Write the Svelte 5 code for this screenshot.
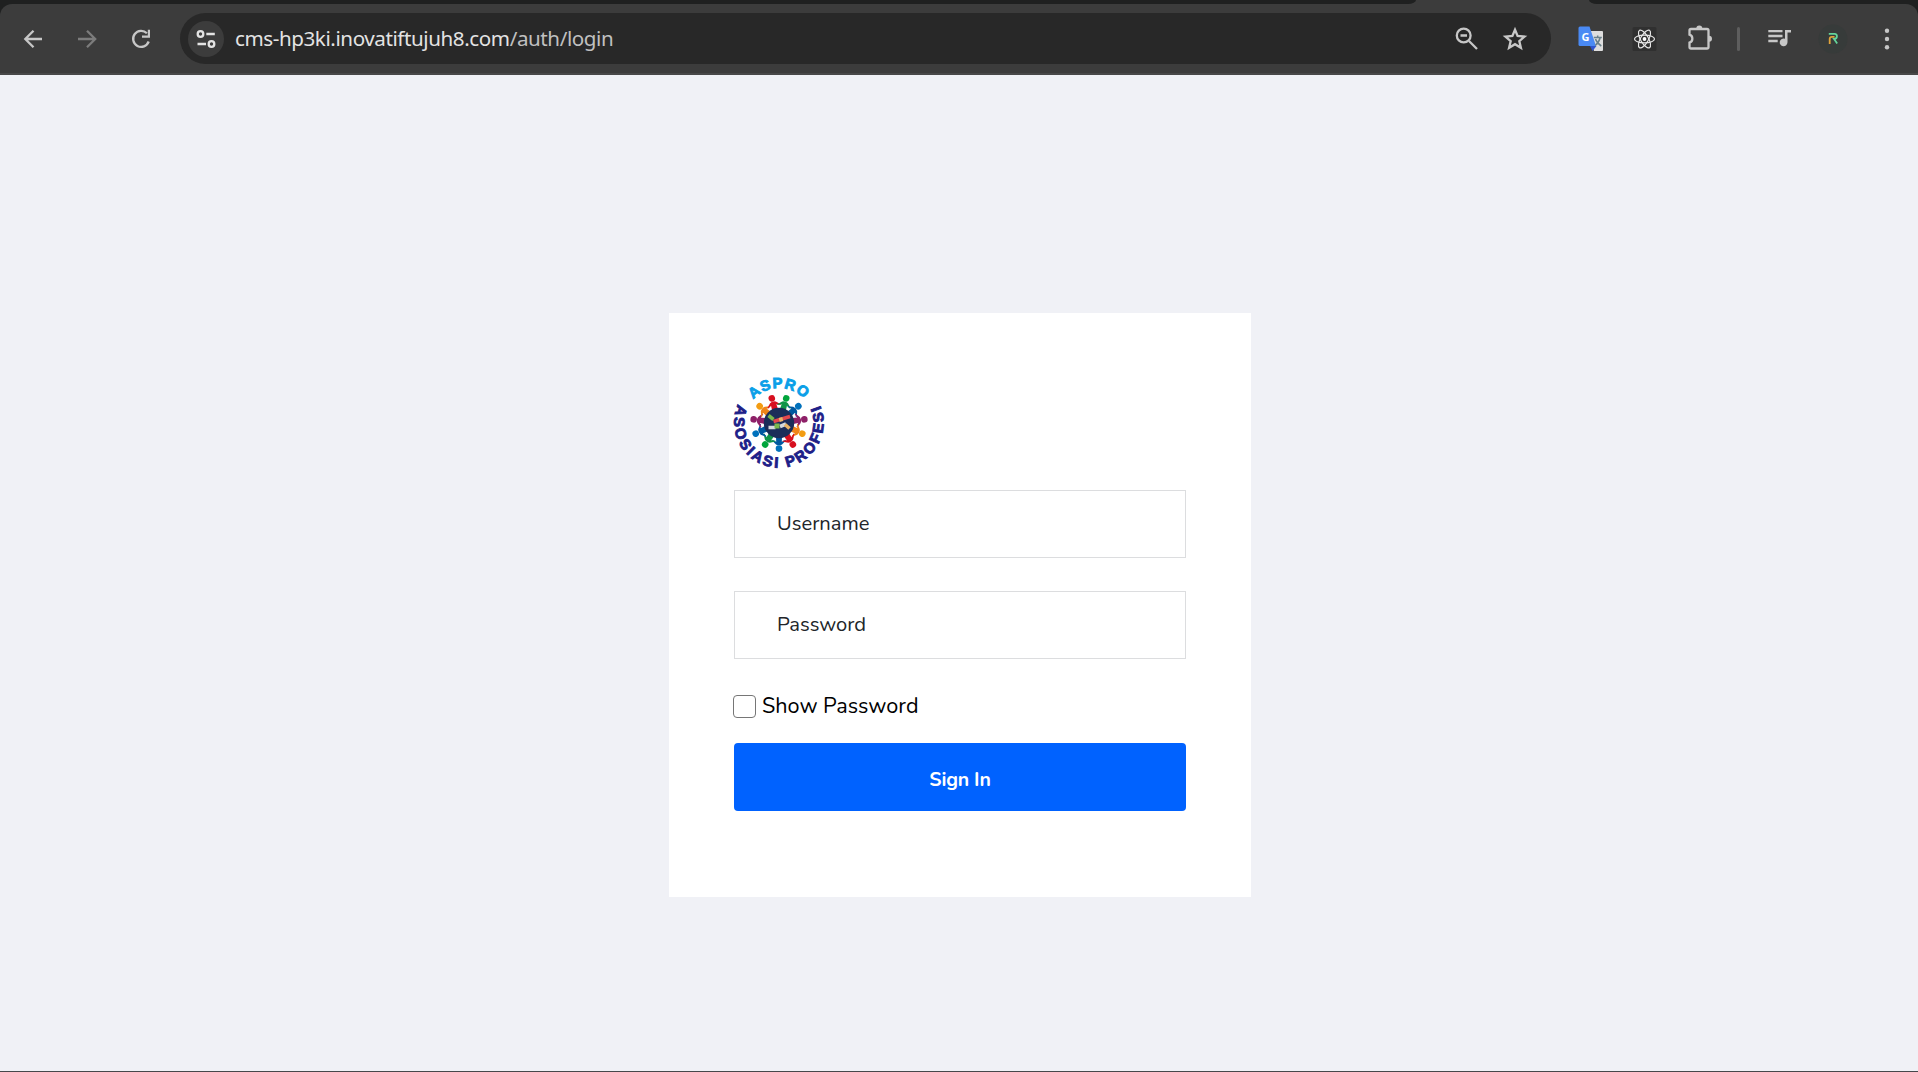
<script>
  let username = $state('');
  let password = $state('');
  let showPassword = $state(false);

  const step = 360 / 11;
  const people = [
    ['#0071bc', '#0058a0'],
    ['#00a53c', '#109447'],
    ['#0071bc', '#0058a0'],
    ['#8e2068', '#8e2068'],
    ['#f39c12', '#f08519'],
    ['#d7101f', '#d7101f'],
    ['#00a53c', '#109447'],
    ['#0071bc', '#0058a0'],
    ['#8e2068', '#8e2068'],
    ['#f39c12', '#f08519'],
    ['#d7101f', '#d7101f']
  ].map(([head, body], i) => ({ head, body, angle: i * step }));
</script>

<div class="browser">
  <div class="tabstrip">
    <div class="strip-left"></div>
    <div class="strip-right"></div>
  </div>
  <div class="toolbar-back">
    <header class="toolbar">
      <svg class="icon" viewBox="0 0 30 30"><path class="line" d="M24 15H7.5M15.500 6.800 7.300 15l8.200 8.200" /></svg>
      <svg class="icon dim" viewBox="0 0 30 30"><path class="line" d="M6 15h16.500M15 6.800 23.200 15 15 23.200" /></svg>
      <svg class="icon" viewBox="0 0 30 30">
        <path class="line" d="M22.700 17.500a8 8 0 1 1-1.800-8.200" />
        <path class="solid" d="M24 5.800v8h-8v-2.300h5.800V5.800z" />
      </svg>
      <div class="address">
        <span class="site">
          <svg class="icon" viewBox="0 0 30 30">
            <circle class="line" cx="9.500" cy="10" r="2.800" />
            <circle class="line" cx="20.500" cy="20" r="2.800" />
            <path class="line" d="M15.300 10h8.500M6.500 20H15" />
          </svg>
        </span>
        <span class="url">cms-hp3ki.inovatiftujuh8.com<span class="path">/auth/login</span></span>
        <svg class="icon" viewBox="0 0 30 30">
          <circle class="line" cx="11.700" cy="11.500" r="6.900" />
          <path class="line" d="m17 17 8 8M8.500 11.500H15" />
        </svg>
        <svg class="icon star" viewBox="0 0 30 30">
          <path class="line" d="m15 5.700 2.600 6.300 6.900.600-5.200 4.500 1.600 6.700-5.900-3.600-5.900 3.600 1.600-6.700-5.200-4.500 6.900-.600z" />
        </svg>
      </div>
      <svg class="icon" viewBox="0 0 30 30">
        <path fill="#dedede" d="M12 7h14q1 0 1 1v18q0 1-1 1H18z" />
        <path fill="#2f55cf" d="M14 22h6.500L16.500 27z" />
        <path fill="#4a8af4" d="M4 2.500h9.500L20 22H4q-1.500 0-1.500-1.500V4q0-1.500 1.500-1.500z" />
        <path fill="none" stroke="#69808a" stroke-width="1.500" d="M17.800 13.500h8M21.700 11.500v2M24.200 13.500c-.8 3.500-2.500 6-5 8M19.500 15c1 3 3.500 5.500 5.800 7" />
        <text x="5.500" y="16.500" font-size="11" font-weight="700" fill="#fff">G</text>
      </svg>
      <svg class="icon" viewBox="0.500 0 30 30">
        <rect x="3" y="3" width="24" height="24" rx="1.500" fill="#303030" />
        <g fill="none" stroke="#e8e8e8" stroke-width="1.200">
          <ellipse cx="15" cy="15" rx="10" ry="3.900" />
          <ellipse cx="15" cy="15" rx="10" ry="3.900" transform="rotate(60 15 15)" />
          <ellipse cx="15" cy="15" rx="10" ry="3.900" transform="rotate(120 15 15)" />
        </g>
        <circle cx="15" cy="15" r="1.900" fill="#fff" />
      </svg>
      <svg class="icon" viewBox="-0.500 0.500 30 30">
        <path class="line" d="M6.500 5.500h16q1.500 0 1.500 1.500v16.500q0 1.500-1.500 1.500h-16Q5 25 5 23.500V19.200c3.800-1.200 3.800-6.800 0-8V7q0-1.500 1.500-1.500z" />
        <path class="solid" d="M11.800 5a3 3 0 0 1 6 0zM24.500 12.300a3 3 0 0 1 0 6z" />
      </svg>
      <span class="divider"></span>
      <svg class="icon" viewBox="-0.500 0 30 30">
        <path class="line" d="M3.800 7.200H18M3.800 12H18M3.800 17H13.200" />
        <path class="solid" d="M20.500 6h6v2.600h-3.500v9.700a3.900 3.900 0 1 1-2.500-3.600z" />
      </svg>
      <svg class="icon" viewBox="0 0 30 30">
        <circle cx="15" cy="15" r="14.500" fill="#373b3a" />
        <g fill="none" stroke-width="1.800">
          <path stroke="#e0a33a" d="M11.700 20v-5q0-2.200 2.200-2.200h2.600" />
          <path stroke="#64d49a" d="M10.800 9.800h5.800c3.200 0 3.200 5.200-.6 5.200l3.200 4.500" />
        </g>
      </svg>
      <svg class="icon" viewBox="0 0 30 30">
        <circle class="solid" cx="15" cy="6.800" r="2.200" />
        <circle class="solid" cx="15" cy="15" r="2.200" />
        <circle class="solid" cx="15" cy="23.200" r="2.200" />
      </svg>
    </header>
  </div>

  <main class="page">
    <form class="card" onsubmit={(e) => e.preventDefault()}>
      <svg class="logo" viewBox="0 0 90 90">
        <defs>
          <path id="arc-top" d="M19.200 21.500A35 35 0 0 1 70.800 21.500" />
          <path id="arc-bottom" d="M4 26.500A44.800 44.800 0 1 0 85.500 26" />
        </defs>
        <text class="brand top"><textPath href="#arc-top" textLength="57">ASPRO</textPath></text>
        <text class="brand bottom"><textPath href="#arc-bottom" textLength="177">ASOSIASI PROFESI</textPath></text>
        {#each people as p}
          <g transform="translate(45 45) rotate({p.angle})">
            <path fill={p.body} d="M-3 21.500Q0 23.200 3 21.500L7 17.500 6.500 16.800 2.800 18.800 3 14H-3L-2.800 18.800-6.500 16.800-7 17.500z" />
            <circle fill={p.head} cy="25.600" r="3.300" />
          </g>
        {/each}
        <circle cx="45" cy="45" r="15.200" fill="#1b2d59" />
        <g stroke-width="3.600" fill="none">
          <path stroke="#79b84c" d="m34.500 37.500 5 4" />
          <path stroke="#e5484d" d="M39.500 43.500 56 38.500" />
          <path stroke="#d5d9dc" d="M34.500 49.500h7M46 48.500l6-2.500" />
          <path stroke="#eab566" d="m46.500 39.500 1 4M51 46.500l4.500 4" />
          <path stroke="#79b84c" d="M40.500 48h5" stroke-width="5" />
        </g>
      </svg>
      <input class="field" type="text" placeholder="Username" bind:value={username} />
      <input class="field second" type={showPassword ? 'text' : 'password'} placeholder="Password" bind:value={password} />
      <label class="show">
        <input class="check" type="checkbox" bind:checked={showPassword} />
        <span>Show Password</span>
      </label>
      <button class="submit" type="submit">Sign In</button>
    </form>
  </main>
</div>

<style>
  :global(body) { margin: 0; }
  .browser {
    display: flex;
    flex-direction: column;
    height: 1072px;
    box-sizing: border-box;
    border-bottom: 1px solid #46474b;
    background: #f0f1f6;
    font-family: Nunito, 'Open Sans', sans-serif;
    overflow: hidden;
  }
  .tabstrip {
    display: flex;
    justify-content: space-between;
    height: 4px;
    background: #3c3c3c;
  }
  .strip-left { width: 1416px; background: #1f2020; border-bottom-right-radius: 8px 4px; }
  .strip-right { width: 329px; background: #1f2020; border-bottom-left-radius: 8px 4px; }
  .toolbar-back { background: #1f2020; }
  .toolbar {
    display: flex;
    align-items: center;
    gap: 24px;
    height: 71px;
    box-sizing: border-box;
    padding: 1px 16px 0 18px;
    border-bottom: 2px solid #484848;
    border-radius: 12px 12px 0 0;
    background: #3c3c3c;
  }
  .icon { width: 30px; height: 30px; flex: none; color: #c7c7c7; font-family: 'Open Sans', sans-serif; }
  .dim { color: #7c7c7c; }
  .line { fill: none; stroke: currentColor; stroke-width: 2.3; }
  .solid { fill: currentColor; }
  .address {
    display: flex;
    align-items: center;
    flex: 1;
    height: 51px;
    box-sizing: border-box;
    margin: -1px 1px 0 0;
    padding: 0 21px 0 8px;
    border-radius: 26px;
    background: #282828;
  }
  .site {
    display: grid;
    place-items: center;
    width: 36px;
    height: 36px;
    margin-right: 11px;
    border-radius: 50%;
    background: #3c3c3c;
  }
  .site .icon { color: #e3e3e3; }
  .url {
    flex: 1;
    padding-bottom: 2px;
    color: #e3e3e3;
    font: 20.6px/30px 'Segoe UI', 'Noto Sans', sans-serif;
    letter-spacing: -0.42px;
    white-space: nowrap;
  }
  .path { color: #c0c0c0; }
  .star { margin-left: 18px; }
  .divider { width: 3px; height: 24px; margin-left: -1px; border-radius: 2px; background: #5e5e5e; }
  .page { flex: 1; padding-top: 238px; }
  .card {
    display: flex;
    flex-direction: column;
    width: 582px;
    height: 584px;
    box-sizing: border-box;
    margin: 0 auto 0 669px;
    padding: 65px;
    background: #fff;
  }
  .logo { width: 90px; height: 90px; margin-bottom: 22px; overflow: visible; flex: none; }
  .brand { font: 700 14.8px 'Liberation Sans', Arial, sans-serif; stroke-width: 0.9; }
  .top { fill: #0b9fe8; stroke: #0b9fe8; }
  .bottom { fill: #1d2088; stroke: #1d2088; }
  .field {
    height: 68px;
    width: 100%;
    box-sizing: border-box;
    padding: 0 42px 2px;
    border: 1px solid #dcdddf;
    border-radius: 0;
    outline: none;
    background: #fff;
    color: #212529;
    font: 20.2px Nunito, 'Open Sans', sans-serif;
  }
  .field::placeholder { color: #212529; opacity: 1; }
  .second { margin-top: 33px; }
  .show {
    display: flex;
    align-items: center;
    height: 24px;
    margin: 35px 0 25px -1px;
    color: #000;
    font-size: 21.6px;
    line-height: 24px;
    white-space: nowrap;
  }
  .check {
    appearance: none;
    width: 23px;
    height: 23px;
    box-sizing: border-box;
    margin: 0 6px 0 0;
    border: 1.5px solid #767676;
    border-radius: 4px;
    background: #fff;
  }
  .check:checked { background: #0062ff; }
  .submit {
    height: 68px;
    padding: 4px 0 0;
    border: 0;
    border-radius: 4px;
    background: #0062ff;
    color: #fff;
    font: 700 19.5px Nunito, 'Open Sans', sans-serif;
    letter-spacing: -0.2px;
  }
</style>
